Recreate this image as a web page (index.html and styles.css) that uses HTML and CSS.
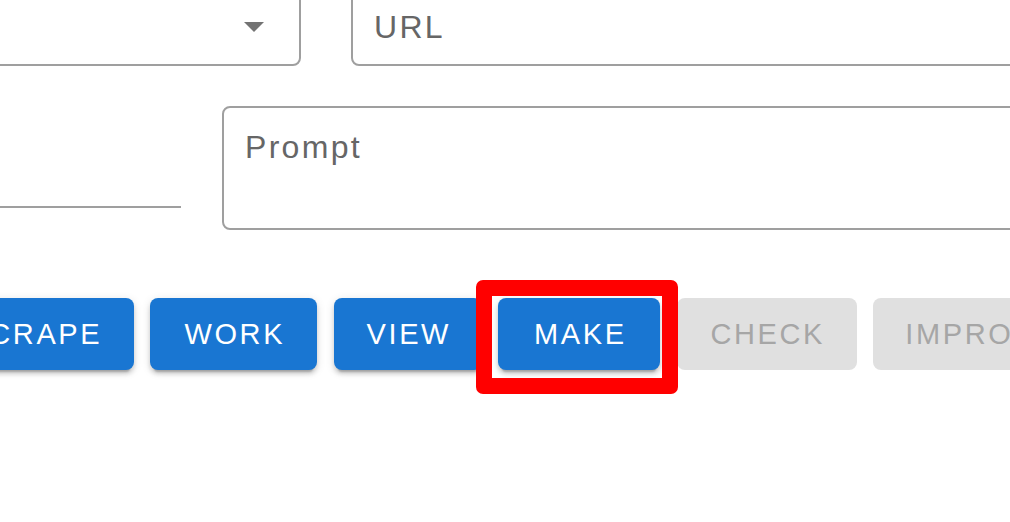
FILE: index.html
```html
<!DOCTYPE html>
<html lang="en">
<head>
<meta charset="utf-8">
<title>Form</title>
<link rel="stylesheet" href="styles.css">
</head>
<body>
<main class="page">
  <div class="row row-top">
    <div class="field outlined select">
      <svg class="arrow" viewBox="0 0 20 10" aria-hidden="true"><polygon points="0,0 20,0 10,10"/></svg>
    </div>
    <div class="field outlined url"><span class="label">URL</span></div>
  </div>
  <div class="row row-mid">
    <div class="field standard"></div>
    <div class="field outlined prompt"><span class="label">Prompt</span></div>
  </div>
  <div class="row row-actions">
    <button class="btn btn-scrape">SCRAPE</button>
    <button class="btn btn-work">WORK</button>
    <button class="btn btn-view">VIEW</button>
    <div class="highlight-wrap">
      <button class="btn btn-make">MAKE</button>
      <span class="highlight"></span>
    </div>
    <button class="btn btn-check" disabled>CHECK</button>
    <button class="btn btn-improve" disabled>IMPROVE</button>
  </div>
</main>
</body>
</html>
```

FILE: styles.css
```css
html, body {
  margin: 0;
  background: #ffffff;
}

body {
  width: 1010px;
  height: 522px;
  overflow: hidden;
  font-family: "Liberation Sans", Arial, sans-serif;
}

.page {
  display: flex;
  flex-direction: column;
}

.row {
  display: flex;
  align-items: flex-start;
  flex: none;
}

.row-top {
  margin-top: -14px;
  margin-left: -99px;
  gap: 50px;
  height: 80px;
}

.row-mid {
  margin-top: 40px;
  margin-left: -119px;
  gap: 41px;
}

.row-actions {
  margin-top: 68px;
  margin-left: -66.5px;
  gap: 16.5px;
}

.field {
  box-sizing: border-box;
  flex: none;
}

.outlined {
  border: 2px solid #9f9f9f;
  border-radius: 8px;
}

.select {
  width: 400px;
  height: 80px;
  display: flex;
  align-items: center;
  justify-content: flex-end;
  padding-right: 35px;
}

.arrow {
  width: 20px;
  height: 10px;
  fill: #737373;
  margin-top: 1px;
}

.url {
  width: 800px;
  height: 80px;
  padding: 23px 21px;
}

.standard {
  width: 300px;
  height: 102px;
  border-bottom: 2px solid #9f9f9f;
}

.prompt {
  width: 900px;
  height: 124px;
  padding: 23px 21px;
}

.label {
  display: block;
  font-size: 32px;
  line-height: 32px;
  letter-spacing: 2.3px;
  color: #666666;
}

.btn {
  flex: none;
  box-sizing: border-box;
  height: 72px;
  border: 0;
  border-radius: 8px;
  padding: 0 0 0 2.6px;
  margin: 0;
  font-family: inherit;
  font-size: 29px;
  line-height: 29px;
  letter-spacing: 2.6px;
  text-align: center;
  background: #1976d2;
  color: #ffffff;
  box-shadow: 0 6px 2px -4px rgba(0, 0, 0, 0.2),
              0 4px 4px 0 rgba(0, 0, 0, 0.14),
              0 2px 10px 0 rgba(0, 0, 0, 0.12);
}

.btn:disabled {
  background: #e0e0e0;
  color: #a6a6a6;
  box-shadow: none;
}

.btn-scrape { width: 200px; }
.btn-work { width: 167px; }
.btn-view { width: 148px; }
.btn-make { width: 162px; }
.btn-check { width: 180px; }
.btn-improve { width: 214px; }

.highlight-wrap {
  position: relative;
  display: flex;
  flex: none;
}

.highlight {
  position: absolute;
  left: -22px;
  top: -18px;
  width: 202px;
  height: 114px;
  box-sizing: border-box;
  border: 16px solid #ff0000;
  border-radius: 7px;
  pointer-events: none;
}
```
